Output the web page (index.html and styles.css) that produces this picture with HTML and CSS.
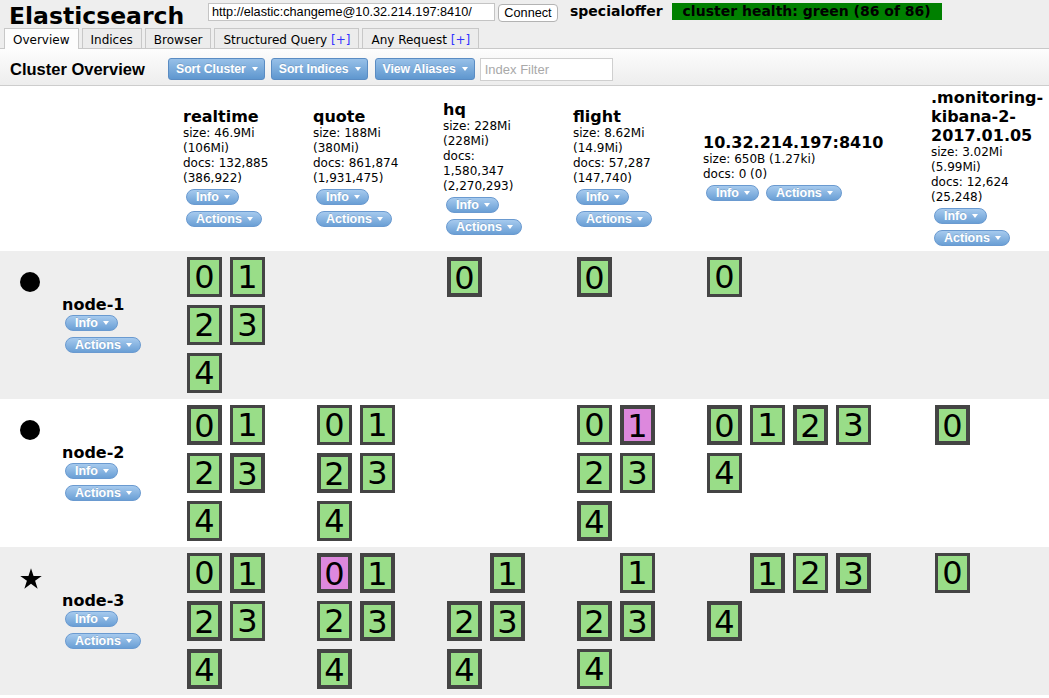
FILE: index.html
```html
<!DOCTYPE html>
<html>
<head>
<meta charset="utf-8">
<title>Elasticsearch</title>
<link rel="stylesheet" href="styles.css">
</head>
<body>
<div class="topbar">
  <h1 class="brand">Elasticsearch</h1>
  <input class="url" type="text" value="http://elastic:changeme@10.32.214.197:8410/">
  <button class="connect">Connect</button>
  <span class="cluster-name">specialoffer</span>
  <span class="health">cluster health: green (86 of 86)</span>
</div>
<div class="tabs">
  <div class="tab active">Overview</div>
  <div class="tab">Indices</div>
  <div class="tab">Browser</div>
  <div class="tab">Structured Query <span class="plus">[+]</span></div>
  <div class="tab">Any Request <span class="plus">[+]</span></div>
</div>
<div class="toolbar">
  <h2 class="toolbar-title">Cluster Overview</h2>
  <span class="tbtn">Sort Cluster<i class="caret"></i></span>
  <span class="tbtn gap7">Sort Indices<i class="caret"></i></span>
  <span class="tbtn gap5">View Aliases<i class="caret"></i></span>
  <input class="filter" type="text" placeholder="Index Filter">
</div>

<div class="overview">
  <div class="row head">
    <div class="cell"></div>
    <div class="cell">
      <div class="idx">
        <h3 class="idx-name">realtime</h3>
        <div class="idx-stat">size: 46.9Mi (106Mi)</div>
        <div class="idx-stat">docs: 132,885 (386,922)</div>
        <div class="btns"><span class="pill">Info<i class="caret"></i></span><span class="pill">Actions<i class="caret"></i></span></div>
      </div>
    </div>
    <div class="cell">
      <div class="idx">
        <h3 class="idx-name">quote</h3>
        <div class="idx-stat">size: 188Mi (380Mi)</div>
        <div class="idx-stat">docs: 861,874 (1,931,475)</div>
        <div class="btns"><span class="pill">Info<i class="caret"></i></span><span class="pill">Actions<i class="caret"></i></span></div>
      </div>
    </div>
    <div class="cell">
      <div class="idx">
        <h3 class="idx-name">hq</h3>
        <div class="idx-stat">size: 228Mi (228Mi)</div>
        <div class="idx-stat">docs: 1,580,347 (2,270,293)</div>
        <div class="btns"><span class="pill">Info<i class="caret"></i></span><span class="pill">Actions<i class="caret"></i></span></div>
      </div>
    </div>
    <div class="cell">
      <div class="idx">
        <h3 class="idx-name">flight</h3>
        <div class="idx-stat">size: 8.62Mi (14.9Mi)</div>
        <div class="idx-stat">docs: 57,287 (147,740)</div>
        <div class="btns"><span class="pill">Info<i class="caret"></i></span><span class="pill">Actions<i class="caret"></i></span></div>
      </div>
    </div>
    <div class="cell">
      <div class="idx wide">
        <h3 class="idx-name">10.32.214.197:8410</h3>
        <div class="idx-stat">size: 650B (1.27ki)</div>
        <div class="idx-stat">docs: 0 (0)</div>
        <div class="btns"><span class="pill">Info<i class="caret"></i></span><span class="pill">Actions<i class="caret"></i></span></div>
      </div>
    </div>
    <div class="cell">
      <div class="idx last">
        <h3 class="idx-name">.monitoring-<wbr>kibana-2-<wbr>2017.01.05</h3>
        <div class="idx-stat">size: 3.02Mi (5.99Mi)</div>
        <div class="idx-stat">docs: 12,624 (25,248)</div>
        <div class="btns"><span class="pill">Info<i class="caret"></i></span><span class="pill">Actions<i class="caret"></i></span></div>
      </div>
    </div>
  </div>

  <div class="row node alt">
    <div class="cell node-cell">
      <div class="node-icon"><span class="dot"></span></div>
      <h3 class="node-name">node-1</h3>
      <div class="btns node-btns"><span class="pill">Info<i class="caret"></i></span><span class="pill">Actions<i class="caret"></i></span></div>
    </div>
    <div class="cell"><div class="shards">
      <div class="shard">0</div><div class="shard">1</div><div class="shard">2</div><div class="shard">3</div><div class="shard">4</div>
    </div></div>
    <div class="cell"><div class="shards"></div></div>
    <div class="cell"><div class="shards">
      <div class="shard primary">0</div>
    </div></div>
    <div class="cell"><div class="shards">
      <div class="shard primary">0</div>
    </div></div>
    <div class="cell"><div class="shards wide">
      <div class="shard">0</div>
    </div></div>
    <div class="cell"><div class="shards"></div></div>
  </div>

  <div class="row node">
    <div class="cell node-cell">
      <div class="node-icon"><span class="dot"></span></div>
      <h3 class="node-name">node-2</h3>
      <div class="btns node-btns"><span class="pill">Info<i class="caret"></i></span><span class="pill">Actions<i class="caret"></i></span></div>
    </div>
    <div class="cell"><div class="shards">
      <div class="shard primary">0</div><div class="shard">1</div><div class="shard">2</div><div class="shard primary">3</div><div class="shard">4</div>
    </div></div>
    <div class="cell"><div class="shards">
      <div class="shard">0</div><div class="shard">1</div><div class="shard primary">2</div><div class="shard">3</div><div class="shard">4</div>
    </div></div>
    <div class="cell"><div class="shards"></div></div>
    <div class="cell"><div class="shards">
      <div class="shard">0</div><div class="shard primary moving">1</div><div class="shard">2</div><div class="shard">3</div><div class="shard primary">4</div>
    </div></div>
    <div class="cell"><div class="shards wide">
      <div class="shard primary">0</div><div class="shard">1</div><div class="shard primary">2</div><div class="shard">3</div><div class="shard">4</div>
    </div></div>
    <div class="cell"><div class="shards">
      <div class="shard primary">0</div>
    </div></div>
  </div>

  <div class="row node alt">
    <div class="cell node-cell">
      <div class="node-icon">
        <svg class="star" width="22" height="21" viewBox="0 0 22 21"><polygon points="11,0.2 13.54,8.01 21.75,8.01 15.1,12.83 17.64,20.64 11,15.82 4.36,20.64 6.9,12.83 0.25,8.01 8.46,8.01" fill="#000"/></svg>
      </div>
      <h3 class="node-name">node-3</h3>
      <div class="btns node-btns"><span class="pill">Info<i class="caret"></i></span><span class="pill">Actions<i class="caret"></i></span></div>
    </div>
    <div class="cell"><div class="shards">
      <div class="shard">0</div><div class="shard primary">1</div><div class="shard primary">2</div><div class="shard">3</div><div class="shard primary">4</div>
    </div></div>
    <div class="cell"><div class="shards">
      <div class="shard primary moving">0</div><div class="shard primary">1</div><div class="shard">2</div><div class="shard primary">3</div><div class="shard primary">4</div>
    </div></div>
    <div class="cell"><div class="shards">
      <div class="shard none">0</div><div class="shard primary">1</div><div class="shard primary">2</div><div class="shard primary">3</div><div class="shard primary">4</div>
    </div></div>
    <div class="cell"><div class="shards">
      <div class="shard none">0</div><div class="shard">1</div><div class="shard primary">2</div><div class="shard primary">3</div><div class="shard">4</div>
    </div></div>
    <div class="cell"><div class="shards wide">
      <div class="shard none">0</div><div class="shard primary">1</div><div class="shard">2</div><div class="shard primary">3</div><div class="shard primary">4</div>
    </div></div>
    <div class="cell"><div class="shards">
      <div class="shard">0</div>
    </div></div>
  </div>
</div>
</body>
</html>
```

FILE: styles.css
```css
* { box-sizing: border-box; }
html, body { margin: 0; padding: 0; }
body {
  width: 1049px;
  overflow: hidden;
  font-family: "DejaVu Sans", Verdana, sans-serif;
  font-size: 12px;
  color: #000;
  background: #fff;
}

/* top bar */
.topbar {
  display: flex;
  align-items: flex-start;
  height: 28px;
  padding-left: 9px;
  background: #eee;
}
.brand {
  margin: 4px 0 0;
  width: 199px;
  font-size: 23.5px;
  line-height: 24px;
  font-weight: bold;
}
.url {
  margin: 3px 0 0;
  width: 287px;
  height: 18px;
  padding: 0 3px;
  border: 1px solid #c4c4c4;
  background: #fff;
  font-family: "Liberation Sans", Arial, sans-serif;
  font-size: 12.7px;
  color: #000;
  outline: none;
}
.connect {
  margin: 4px 0 0 3px;
  width: 60px;
  height: 18px;
  padding: 0;
  border: 1px solid #b3b3b3;
  border-radius: 4px;
  background: #fff;
  font-family: "Liberation Sans", Arial, sans-serif;
  font-size: 12.7px;
  color: #000;
}
.cluster-name {
  margin: 3px 0 0 12px;
  font-size: 14px;
  line-height: 17px;
  font-weight: bold;
}
.health {
  margin: 3px 0 0 9px;
  height: 17px;
  padding: 0 11px;
  background: #008000;
  font-size: 14px;
  line-height: 17px;
  font-weight: bold;
}

/* tabs */
.tabs {
  display: flex;
  align-items: flex-start;
  gap: 3px;
  height: 21px;
  padding-left: 4px;
  background: #eee;
  border-bottom: 1px solid #c8c8c8;
}
.tab {
  height: 20px;
  padding: 3px 8px 0;
  border: 1px solid #c8c8c8;
  border-bottom: none;
  background: #ececec;
  font-size: 12px;
  line-height: 16px;
}
.tab.active {
  height: 21px;
  background: #fdfdfd;
}
.plus { color: #3333ff; }

/* toolbar */
.toolbar {
  display: flex;
  align-items: flex-start;
  height: 37px;
  padding: 9px 0 0 10px;
  background: linear-gradient(#fdfdfd, #ededed);
  border-bottom: 1px solid #cdcdcd;
}
.toolbar-title {
  margin: 0;
  width: 158px;
  font-family: "Liberation Sans", Arial, sans-serif;
  font-size: 16.5px;
  line-height: 22px;
  font-weight: bold;
}
.tbtn {
  display: inline-flex;
  align-items: center;
  height: 22px;
  padding: 0 6px 0 7px;
  margin-right: 6px;
  border: 1px solid #5a8cc3;
  border-radius: 3px;
  background: linear-gradient(#97c0e8, #5f97cf);
  color: #fff;
  font-family: "Liberation Sans", Arial, sans-serif;
  font-size: 12.2px;
  font-weight: bold;
  text-shadow: 0 -1px 0 rgba(0, 0, 0, 0.12);
}
.tbtn.gap7 { margin-right: 7px; }
.tbtn.gap5 { margin-right: 5px; }
.caret {
  display: inline-block;
  width: 0;
  height: 0;
  margin-left: 6px;
  border-left: 3.5px solid transparent;
  border-right: 3.5px solid transparent;
  border-top: 4px solid #fff;
}
.filter {
  width: 133px;
  height: 23px;
  padding: 0 4px;
  border: 1px solid #cfcfcf;
  background: #fff;
  font-family: "Liberation Sans", Arial, sans-serif;
  font-size: 13px;
  outline: none;
}
.filter::placeholder { color: #a9a9a9; }

/* overview grid */
.row {
  display: grid;
  grid-template-columns: 183px 130px 130px 130px 130px 228px 118px;
  padding: 2px 0;
}
.row.head { align-items: center; }
.row.node { align-items: start; }
.row.alt { background: #eee; }

.idx { max-width: 90px; }
.idx.wide { max-width: 210px; }
.idx.last { max-width: none; }
.idx-name {
  margin: 0;
  font-size: 16px;
  line-height: 19px;
  font-weight: bold;
}
.idx-stat { line-height: 15px; }

.btns {
  display: flex;
  flex-wrap: wrap;
  gap: 6px 7px;
  padding: 3px 0 3px 3px;
}
.pill {
  display: inline-flex;
  align-items: center;
  height: 16px;
  padding: 0 8px 0 9px;
  border: 1px solid #6a9ad0;
  border-radius: 8px;
  background: linear-gradient(#a6caee, #6a9fd5);
  color: #fff;
  font-family: "Liberation Sans", Arial, sans-serif;
  font-size: 12.5px;
  font-weight: bold;
  line-height: 14px;
  white-space: nowrap;
  text-shadow: 0 -1px 0 rgba(0, 0, 0, 0.12);
}
.pill .caret { margin-left: 5px; }

/* node column */
.node-cell { padding: 19px 0 0 20px; }
.node-icon { height: 20px; }
.dot {
  display: block;
  width: 20px;
  height: 20px;
  border-radius: 50%;
  background: #000;
}
.star { display: block; }
.node-name {
  margin: 3px 0 0 42px;
  font-size: 16px;
  line-height: 19px;
  font-weight: bold;
}
.node-btns {
  margin-left: 42px;
  padding-top: 1px;
}

/* shards */
.shards {
  display: flex;
  flex-wrap: wrap;
  max-width: 100px;
}
.shards.wide { max-width: 190px; }
.shard {
  width: 35px;
  height: 40px;
  margin: 4px;
  padding-top: 3px;
  border: 3px solid #444;
  background: #99dd88;
  font-size: 32px;
  line-height: 29px;
  text-align: center;
}
.shard.primary { border-width: 4px; }
.shard.moving { background: #dd88dd; }
.shard.none { visibility: hidden; }
```
